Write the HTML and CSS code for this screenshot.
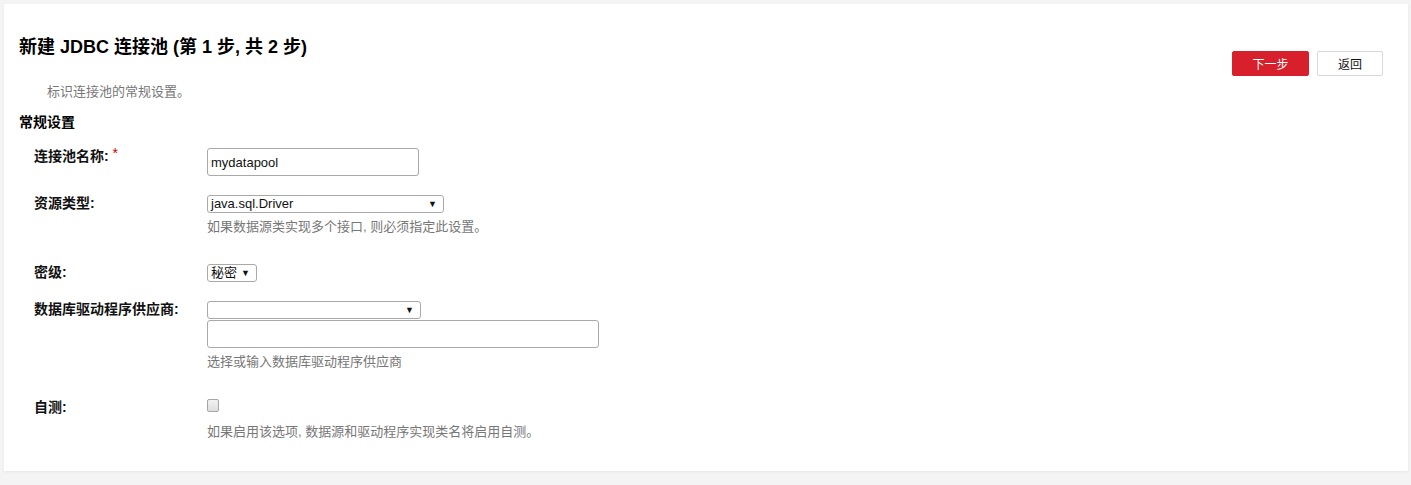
FILE: index.html
```html
<!DOCTYPE html>
<html lang="zh-CN">
<head>
<meta charset="utf-8">
<title>新建 JDBC 连接池</title>
<link rel="stylesheet" href="styles.css">
</head>
<body>
<div class="card">
  <div class="head">
    <h1 class="title">新建 JDBC 连接池 (第 1 步, 共 2 步)</h1>
    <div class="actions">
      <button class="btn btn-primary" type="button">下一步</button>
      <button class="btn btn-default" type="button">返回</button>
    </div>
  </div>
  <p class="subtitle">标识连接池的常规设置。</p>
  <h2 class="section">常规设置</h2>
  <div class="form">
    <div class="row">
      <label class="label">连接池名称: <span class="req">*</span></label>
      <div class="ctrl">
        <input class="text text-name" type="text" value="mydatapool">
      </div>
    </div>
    <div class="row">
      <label class="label">资源类型:</label>
      <div class="ctrl">
        <div class="select select-type"><span class="select-val">java.sql.Driver</span><span class="caret">▼</span></div>
        <div class="help">如果数据源类实现多个接口, 则必须指定此设置。</div>
      </div>
    </div>
    <div class="row">
      <label class="label">密级:</label>
      <div class="ctrl">
        <div class="select select-level"><span class="select-val">秘密</span><span class="caret">▼</span></div>
      </div>
    </div>
    <div class="row">
      <label class="label">数据库驱动程序供应商:</label>
      <div class="ctrl">
        <div class="select select-vendor"><span class="select-val"></span><span class="caret">▼</span></div>
        <input class="text text-vendor" type="text" value="">
        <div class="help">选择或输入数据库驱动程序供应商</div>
      </div>
    </div>
    <div class="row">
      <label class="label">自测:</label>
      <div class="ctrl">
        <span class="check"></span>
        <div class="help help-check">如果启用该选项, 数据源和驱动程序实现类名将启用自测。</div>
      </div>
    </div>
  </div>
</div>
</body>
</html>
```

FILE: styles.css
```css
* { box-sizing: border-box; }
html, body { margin: 0; padding: 0; }
body {
  background: #f4f4f4;
  font-family: "Liberation Sans", "Noto Sans CJK SC", sans-serif;
  color: #111;
  padding: 4px 3px 14px 4px;
}
.card {
  background: #fff;
  height: 467px;
  padding: 31px 25px 0 15px;
  box-shadow: 0 1px 3px rgba(0,0,0,0.06);
}
.head {
  display: flex;
  justify-content: space-between;
  align-items: flex-start;
}
.title {
  margin: 0;
  font-size: 18px;
  line-height: 24px;
  font-weight: bold;
  color: #000;
}
.actions {
  display: flex;
  gap: 8px;
  margin-top: 16px;
}
.btn {
  height: 25px;
  font-family: "Liberation Sans", "Noto Sans CJK SC", sans-serif;
  font-size: 12px;
  border-radius: 2px;
  padding: 0;
  cursor: pointer;
}
.btn-primary {
  width: 77px;
  background: #d7202b;
  border: 1px solid #d7202b;
  color: #fff;
}
.btn-default {
  width: 66px;
  background: #fff;
  border: 1px solid #d9d9d9;
  color: #111;
}
.subtitle {
  margin: 7px 0 0 28px;
  font-size: 13px;
  line-height: 18px;
  color: #777;
}
.section {
  margin: 12px 0 0 0;
  font-size: 14px;
  line-height: 18px;
  font-weight: bold;
  color: #000;
}
.form {
  margin-top: 17px;
  padding-left: 15px;
}
.row {
  display: flex;
  margin-bottom: 19px;
}
.label {
  width: 173px;
  flex: none;
  font-size: 14px;
  font-weight: bold;
  line-height: 16px;
  margin-top: 0;
  color: #111;
}
.req { color: #c00; font-weight: normal; position: relative; top: -3px; }
.ctrl {
  display: flex;
  flex-direction: column;
  align-items: flex-start;
}
.text {
  display: block;
  margin: 0;
  border: 1px solid #a9a9a9;
  border-radius: 3px;
  padding: 0 3px;
  font-family: "Liberation Sans", sans-serif;
  font-size: 13px;
  color: #111;
  background: #fff;
  outline: none;
}
.text-name { width: 212px; height: 28px; }
.text-vendor { width: 392px; height: 28px; margin-top: 1px; }
.select {
  display: flex;
  align-items: center;
  justify-content: space-between;
  height: 18px;
  border: 1px solid #a9a9a9;
  border-radius: 3px;
  padding: 0 6px 0 3px;
  font-size: 13px;
  line-height: 16px;
  background: #fff;
  color: #111;
}
.select-type { width: 237px; }
.select-level { width: 50px; }
.select-vendor { width: 214px; }
.caret { font-size: 9px; color: #111; }
.help {
  margin: 5px 0 10px 0;
  font-size: 13px;
  line-height: 17px;
  color: #777;
}
.help-check { margin-top: 11px; }
.check {
  display: block;
  width: 12px;
  height: 13px;
  border: 1px solid #a5a5a5;
  border-radius: 2px;
  background: linear-gradient(#f2f2f2, #dedede);
}
```
